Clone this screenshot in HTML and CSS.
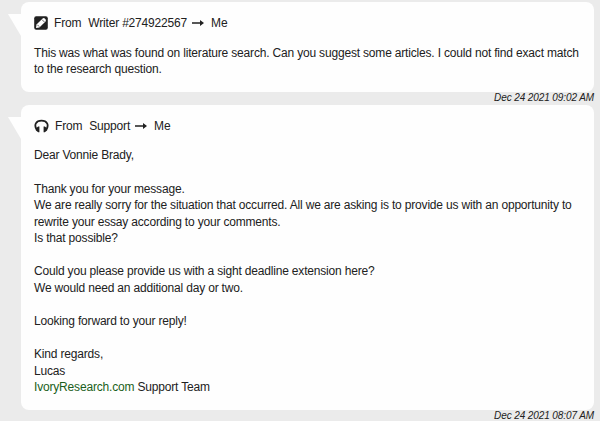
FILE: index.html
```
<!DOCTYPE html>
<html lang="en">
<head>
    <meta charset="UTF-8">
    <title>Messages</title>
    <link rel="stylesheet" href="styles.css">
</head>
<body>
    <div class="messages">
        <div class="message">
            <div class="bubble">
                <div class="message-header">
                    <svg class="icon icon-pencil" viewBox="0 0 14 14">
                        <rect x="0.2" y="0.2" width="13.6" height="13.6" rx="2" fill="#212121"/>
                        <path d="M2 12 L2.5 8.6 L8.6 2.5 Q9.7 1.6 10.8 2.6 L11.4 3.2 Q12.4 4.3 11.5 5.4 L5.4 11.5 Z" fill="#fff"/>
                        <path d="M8 3.6 L10.4 6 M3.4 8.8 L5.2 10.6" stroke="#212121" stroke-width="0.7"/>
                    </svg>
                    <span class="from">From</span>
                    <span class="sender">Writer #274922567</span>
                    <svg class="arrow" viewBox="0 0 12 8">
                        <path d="M0 3.3 H9 V4.7 H0 Z M8 1 L12 4 L8 7 Z" fill="#212121"/>
                    </svg>
                    <span>Me</span>
                </div>
                <p>This was what was found on literature search. Can you suggest some articles. I could not find exact match<br>to the research question.</p>
            </div>
            <div class="date">Dec 24 2021 09:02 AM</div>
        </div>

        <div class="message">
            <div class="bubble">
                <div class="message-header">
                    <svg class="icon icon-support" viewBox="0 0 15 14">
                        <path d="M2.8 10.6 C-0.4 6 2 1.7 7.5 1.7 C13 1.7 15.4 6 12.2 10.6" fill="none" stroke="#212121" stroke-width="1.8"/>
                        <path d="M1.6 9.6 L4.2 7.6 H5.4 V13.2 H4.2 L1.9 11.4 Z M13.4 9.6 L10.8 7.6 H9.6 V13.2 H10.8 L13.1 11.4 Z" fill="#212121"/>
                    </svg>
                    <span class="from">From</span>
                    <span class="sender">Support</span>
                    <svg class="arrow" viewBox="0 0 12 8">
                        <path d="M0 3.3 H9 V4.7 H0 Z M8 1 L12 4 L8 7 Z" fill="#212121"/>
                    </svg>
                    <span>Me</span>
                </div>
                <p>Dear Vonnie Brady,</p>
                <p>Thank you for your message.<br>We are really sorry for the situation that occurred. All we are asking is to provide us with an opportunity to<br>rewrite your essay according to your comments.<br>Is that possible?</p>
                <p>Could you please provide us with a sight deadline extension here?<br>We would need an additional day or two.</p>
                <p>Looking forward to your reply!</p>
                <p>Kind regards,<br>Lucas<br><a href="#">IvoryResearch.com</a> Support Team</p>
            </div>
            <div class="date">Dec 24 2021 08:07 AM</div>
        </div>
    </div>
</body>
</html>
```
FILE: styles.css
```
body {
    font-family: "Liberation Sans", Arial, sans-serif;
    font-size: 12px;
    letter-spacing: -0.18px;
    line-height: 16.58px;
    color: #212121;
    background-color: #ebebeb;
    margin: 0;
    overflow: hidden;
}

.messages {
    padding: 2px 6px 0 20.5px;
}

.bubble {
    position: relative;
    background-color: #fefefe;
    border-radius: 8px;
    padding: 13px 13.5px 14px;
}

.bubble::before {
    content: "";
    position: absolute;
    left: -12.5px;
    top: 12px;
    border-top: 22px solid #fefefe;
    border-left: 13px solid transparent;
}

.message-header {
    display: flex;
    align-items: center;
    height: 16.6px;
    margin-bottom: 13px;
}

.icon {
    flex: none;
    height: 14px;
}

.icon-pencil {
    width: 14px;
    margin-right: 6px;
}

.icon-support {
    width: 15px;
    margin-right: 6px;
}

.sender {
    margin-left: 7px;
}

.arrow {
    width: 12px;
    height: 8px;
    margin: 0 7px 0 5px;
}

p {
    margin: 0 0 16.58px;
    white-space: nowrap;
}

p:last-child {
    margin-bottom: 0;
}

a {
    color: #1b5e20;
    text-decoration: none;
}

.date {
    height: 13px;
    font-size: 10px;
    letter-spacing: -0.1px;
    line-height: 12px;
    font-style: italic;
    text-align: right;
}
```
